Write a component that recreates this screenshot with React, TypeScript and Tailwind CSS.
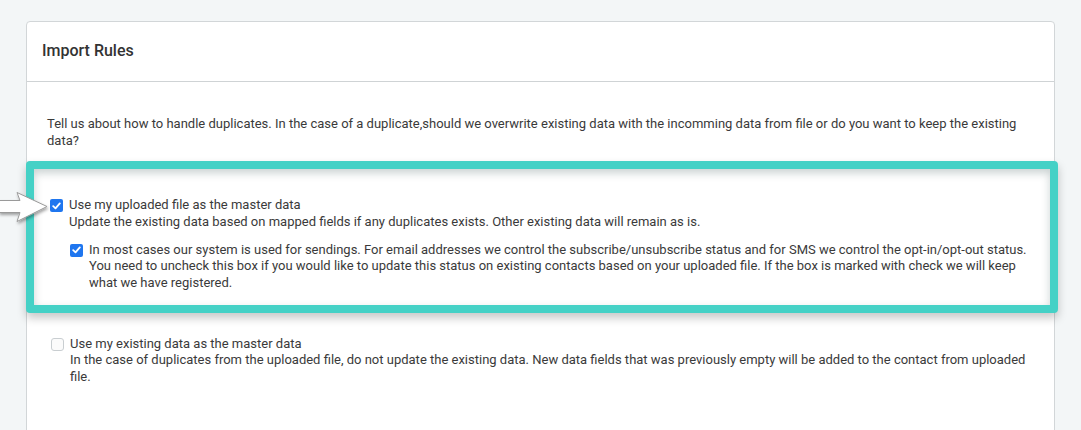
import React from "react";

function Check({ checked }: { checked?: boolean }) {
  if (checked) {
    return (
      <span className="mt-[2px] flex h-[13px] w-[13px] shrink-0 items-center justify-center rounded-[2px] bg-[#1f76ef]">
        <svg width="9" height="8" viewBox="0 0 9 8" fill="none">
          <path d="M1.2 4.2 L3.5 6.4 L7.8 1.4" stroke="white" strokeWidth="1.8" strokeLinecap="round" strokeLinejoin="round" />
        </svg>
      </span>
    );
  }
  return <span className="mt-[2px] block h-[13px] w-[13px] shrink-0 rounded-[3px] border border-[#c9ced1] bg-[#fbfbfb]" />;
}

function Pointer() {
  return (
    <svg className="absolute left-[-1px] top-[191px]" width="54" height="38" viewBox="0 0 54 38">
      <defs>
        <filter id="sh" x="-20%" y="-30%" width="150%" height="170%">
          <feDropShadow dx="1" dy="2" stdDeviation="1.6" floodColor="#000" floodOpacity="0.35" />
        </filter>
      </defs>
      <path
        d="M0 9.5 L21 9.5 L18 1.5 L48 15.5 L18 30.5 L21 21.5 L0 21.5 Z"
        fill="#ffffff"
        stroke="#9a9a9a"
        strokeWidth="1"
        strokeLinejoin="round"
        filter="url(#sh)"
      />
    </svg>
  );
}

export default function App() {
  return (
    <div className="relative min-h-screen bg-[#f3f6f7] pl-[26px] pt-[21px] font-['Roboto',sans-serif] text-[13px] leading-[16.6px] text-[#3a3a3a]">
      <div className="w-[1029px] rounded-[4px] border border-[#d2d6d8] bg-white pb-[60px]">
        <div className="flex h-[60px] items-center border-b border-[#cfd3d5] pl-[15px] text-[16px] font-medium text-[#333]">
          Import Rules
        </div>
        <div className="px-[20px] pt-[34px]">
          <p>
            Tell us about how to handle duplicates. In the case of a duplicate,should we overwrite existing data with the incomming data from file or do you want to keep the existing data?
          </p>

          <div className="ml-[-21px] mt-[12px] w-[1032px] rounded-[4px] border-[8px] border-[#45d1c6] bg-white pb-[13px] pl-[16px] pr-[20px] pt-[28px] shadow-[0_5px_10px_rgba(0,0,0,0.22),inset_0_4px_8px_rgba(60,90,90,0.28)]">
            <div className="flex gap-[6px]">
              <Check checked />
              <div>
                <div>Use my uploaded file as the master data</div>
                <div className="mt-[0.5px]">
                  Update the existing data based on mapped fields if any duplicates exists. Other existing data will remain as is.
                </div>
              </div>
            </div>
            <div className="ml-[20px] mt-[11px] flex gap-[6px]">
              <Check checked />
              <div>
                In most cases our system is used for sendings. For email addresses we control the subscribe/unsubscribe status and for SMS we control the opt-in/opt-out status. You need to uncheck this box if you would like to update this status on existing contacts based on your uploaded file. If the box is marked with check we will keep what we have registered.
              </div>
            </div>
          </div>

          <div className="ml-[4px] mt-[23px] flex gap-[6px]">
            <Check />
            <div>
              <div>Use my existing data as the master data</div>
              <div>
                In the case of duplicates from the uploaded file, do not update the existing data. New data fields that was previously empty will be added to the contact from uploaded file.
              </div>
            </div>
          </div>
        </div>
      </div>
      <Pointer />
    </div>
  );
}
